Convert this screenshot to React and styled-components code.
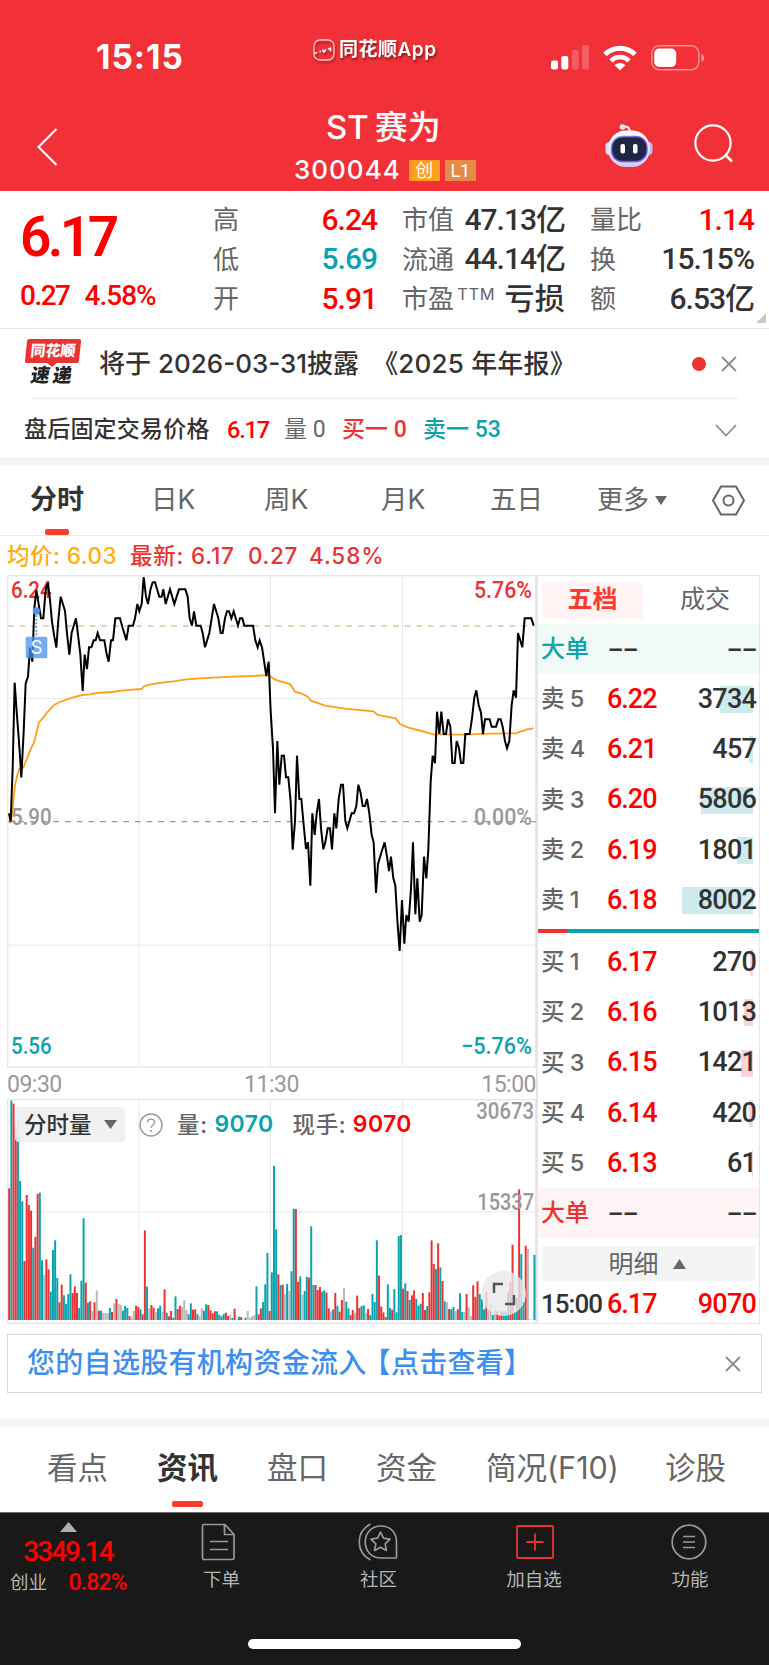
import React from "react";
import styled, { createGlobalStyle } from "styled-components";

const UI = `"Inter", "Noto Sans CJK SC", sans-serif`;
const NUM = `"Roboto", "Noto Sans CJK SC", sans-serif`;

const RED = "#eb3333";
const PURE_RED = "#ff0000";
const TEAL = "#0ba3ad";
const INK = "#333333";
const GREY = "#666666";
const LIGHT = "#999999";

const GlobalStyle = createGlobalStyle`
  * {
    box-sizing: border-box;
  }

  body {
    margin: 0;
    background: #fff;
    font-family: ${UI};
    color: ${INK};
  }

  svg {
    display: block;
    flex: none;
    overflow: visible;
  }
`;

const Page = styled.div`
  width: 769px;
  height: 1665px;
  overflow: hidden;
  display: flex;
  flex-direction: column;
  background: #fff;
`;

const Text = styled.span`
  display: block;
  font-family: ${(props) => (props.$num ? NUM : UI)};
  font-size: ${(props) => props.$size}px;
  font-weight: ${(props) => props.$weight || 400};
  letter-spacing: ${(props) => props.$track || 0}px;
  color: ${(props) => props.$color || INK};
  line-height: 1.2;
  white-space: nowrap;
`;

const Band = styled.div`
  height: 8px;
  flex: none;
  background: #f4f4f4;
`;

/* ---------- header ---------- */

const Header = styled.header`
  height: 191px;
  flex: none;
  background: #f23038;
`;

const StatusBar = styled.div`
  height: 100px;
  padding: 15px 63px 0 96px;
  display: grid;
  grid-template-columns: 217px 238px 1fr;
  align-items: center;
`;

const AppTag = styled.div`
  display: flex;
  align-items: center;
  gap: 4px;
  padding-bottom: 14px;
  filter: drop-shadow(1px 2px 1px rgba(60, 0, 0, 0.55));
`;

const StatusIcons = styled.div`
  display: flex;
  align-items: center;
`;

const NavBar = styled.div`
  height: 91px;
  display: grid;
  grid-template-columns: 294px 1fr 164px;
`;

const BackSlot = styled.div`
  padding: 28px 0 0 36px;
`;

const TitleBlock = styled.div`
  padding-top: 9px;
`;

const Title = styled(Text)`
  line-height: 36px;
  margin-left: 32px;
  word-spacing: -3px;
`;

const CodeRow = styled.div`
  display: flex;
  align-items: center;
  height: 24px;
  margin-top: 13px;
`;

const Badge = styled.span`
  width: 31px;
  height: 21px;
  margin-right: 5px;
  font: 400 18px/21px ${NUM};
  text-align: center;
  color: #fff;
  background: ${(props) => props.$bg};
`;

const NavIcons = styled.div`
  display: flex;
  padding-top: 24px;
`;

/* ---------- quote summary ---------- */

const Summary = styled.section`
  height: 138px;
  flex: none;
  display: grid;
  grid-template-columns: 213px 164px 25px 163px 25px 164px;
  border-bottom: 1px solid #e6e6e6;
  position: relative;
`;

const Current = styled.div`
  padding: 13px 0 0 20px;
`;

const Change = styled.div`
  display: flex;
  gap: 15px;
  margin-top: 9px;
`;

const StatColumn = styled.div`
  padding-top: 9px;
  display: grid;
  grid-auto-rows: 39.5px;
`;

const Stat = styled.div`
  display: flex;
  align-items: center;
  justify-content: space-between;
`;

const StatNote = styled(Text)`
  margin: 0 6px 8px 0;
`;

const Corner = styled.svg`
  position: absolute;
  right: 3px;
  bottom: 5px;
`;

/* ---------- notices ---------- */

const Notice = styled.div`
  height: 69px;
  flex: none;
  margin: 0 32px 0 24px;
  display: flex;
  align-items: center;
`;

const ReportName = styled.span`
  margin-left: 13px;
  letter-spacing: 0.2px;
`;

const Rule = styled.div`
  height: 1px;
  flex: none;
  margin: 0 31px;
  background: #e9e9e9;
`;

const Express = styled.div`
  width: 75px;
  position: relative;
`;

const ExpressTag = styled.div`
  width: 54px;
  height: 24px;
  margin-left: 2px;
  border-radius: 2px;
  background: ${RED};
  transform: skewX(-6deg);
  font: 900 15px/23px ${UI};
  text-align: center;
  color: #fff;
`;

const ExpressWord = styled.div`
  font: 900 19px/25px ${UI};
  letter-spacing: 3px;
  margin-left: 7px;
  color: #222;
  transform: skewX(-10deg);
`;

const Pointer = styled.svg`
  position: absolute;
  left: 22px;
  top: 23px;
`;

const Dot = styled.i`
  width: 14px;
  height: 14px;
  border-radius: 50%;
  background: ${RED};
  margin: 0 15px 0 auto;
`;

const AfterHours = styled.div`
  height: 58px;
  flex: none;
  padding: 4px 32px 0 24px;
  display: grid;
  grid-template-columns: 203px 57px 58px 81px 1fr auto;
  align-items: center;
`;

/* ---------- tabs ---------- */

const PeriodTabs = styled.nav`
  height: 71px;
  flex: none;
  padding: 0 24px 0 30px;
  display: grid;
  grid-template-columns: 121px 113px 117px 109px 107px 1fr auto;
  align-items: center;
  border-bottom: 1px solid #ebebeb;
`;

const SectionTabs = styled.nav`
  height: 85px;
  flex: none;
  padding-left: 47px;
  display: grid;
  grid-template-columns: 110px 110px 109px 110px 179px 1fr;
  align-items: center;
`;

const Tab = styled.div`
  position: relative;
  height: 100%;
  padding-bottom: ${(props) => props.$lift || 0}px;
  display: flex;
  align-items: center;
  gap: 6px;
  justify-self: start;
`;

const Underline = styled.i`
  position: absolute;
  left: 50%;
  bottom: ${(props) => props.$bottom}px;
  width: ${(props) => props.$width}px;
  height: 6px;
  margin-left: ${(props) => -props.$width / 2}px;
  border-radius: 2px;
  background: #ff3b30;
`;

const Legend = styled.div`
  height: 39px;
  flex: none;
  padding: 0 0 0 7px;
  display: grid;
  grid-template-columns: 123px 118px 61px 1fr;
  align-items: center;
`;

/* ---------- chart + order book ---------- */

const Board = styled.section`
  height: 749px;
  flex: none;
  margin: 0 9px 0 7px;
  display: grid;
  grid-template-columns: 529px 224px;
`;

const Charts = styled.div`
  display: flex;
  flex-direction: column;
`;

const TimeAxis = styled.div`
  height: 31px;
  padding-top: 2px;
  display: flex;
  justify-content: space-between;
  align-items: center;
`;

const VolumePane = styled.div`
  position: relative;
`;

const VolumeLegend = styled.div`
  position: absolute;
  left: 8px;
  top: 8px;
  height: 35px;
  display: flex;
  align-items: center;
`;

const VolumePicker = styled.div`
  width: 110px;
  height: 35px;
  margin-right: 14px;
  padding-left: 9px;
  display: flex;
  align-items: center;
  gap: 12px;
  border-radius: 4px;
  background: rgba(240, 240, 240, 0.93);
`;

const Expand = styled.div`
  position: absolute;
  left: 474px;
  top: 172px;
  width: 45px;
  height: 45px;
  border-radius: 50%;
  background: rgba(232, 232, 232, 0.8);
  display: grid;
  place-items: center;
`;

const Book = styled.aside`
  border: 1px solid #e6e6e6;
  border-left-width: 2px;
  display: flex;
  flex-direction: column;
`;

const BookTabs = styled.div`
  height: 48px;
  flex: none;
  padding: 0 4px;
  display: grid;
  grid-template-columns: 101px 1fr;
  align-items: center;
`;

const BookTab = styled(Text)`
  height: 37px;
  line-height: 35px;
  border-radius: 3px;
  text-align: center;
  background: ${(props) => (props.$active ? "#fff3f3" : "none")};
  padding-left: ${(props) => (props.$active ? 0 : 12)}px;
`;

const Level = styled.div`
  height: 50.2px;
  flex: none;
  padding: 0 3px 0 3px;
  display: grid;
  grid-template-columns: 66px 1fr auto;
  align-items: center;
  background: ${(props) => props.$bg || "none"};
`;

const LastTrade = styled(Level)`
  height: 42px;
  padding-top: 4px;
`;

const LevelName = styled(Text)`
  word-spacing: -1px;
`;

const Dashes = styled(Text)`
  padding-bottom: 3px;
`;

const Quantity = styled.div`
  position: relative;
`;

const Depth = styled.i`
  position: absolute;
  right: 3px;
  top: 50%;
  height: 27px;
  margin-top: -13px;
  background: ${(props) => props.$bg};
`;

const QuantityText = styled(Text)`
  position: relative;
`;

const Ratio = styled.div`
  height: 4px;
  flex: none;
  margin: 4px 0;
  background: linear-gradient(to right, ${RED} 29px, ${TEAL} 29px);
`;

const Detail = styled.div`
  height: 35px;
  flex: none;
  margin: 8px 4px 0;
  padding-right: 3px;
  display: flex;
  align-items: center;
  justify-content: center;
  gap: 14px;
  background: #f4f4f4;
`;

/* ---------- bottom ---------- */

const Promo = styled.div`
  height: 59px;
  flex: none;
  margin: 10px 7px 26px 7px;
  padding: 0 20px 0 19px;
  display: flex;
  align-items: center;
  justify-content: space-between;
  border: 1px solid #d6d6d6;
`;

const PromoLink = styled.span`
  margin-left: -4px;
`;

const Footer = styled.footer`
  flex: 1;
  border-top: 1px solid #6c6c6c;
  background: #191919;
`;

const FooterItems = styled.div`
  height: 126px;
  display: grid;
  grid-template-columns: 143px 157px 157px 154px 158px;
`;

const IndexBox = styled.div`
  padding: 9px 7px 0 0;
  display: flex;
  flex-direction: column;
  align-items: center;
  gap: 3px;
`;

const IndexRow = styled.div`
  display: flex;
  align-items: center;
  justify-content: space-between;
  width: 117px;
  margin: -3px 0 0 1px;
`;

const FooterItem = styled.div`
  padding-top: 10px;
  display: flex;
  flex-direction: column;
  align-items: center;
  gap: 7px;
`;

const HomeBar = styled.div`
  width: 273px;
  height: 10px;
  margin: 0 auto;
  border-radius: 5px;
  background: #fff;
`;

/* ---------- data ---------- */

const STATS = [
  [
    ["高", "6.24", PURE_RED],
    ["低", "5.69", TEAL],
    ["开", "5.91", PURE_RED],
  ],
  [
    ["市值", "47.13亿", INK],
    ["流通", "44.14亿", INK],
    ["市盈", "亏损", INK, "TTM"],
  ],
  [
    ["量比", "1.14", PURE_RED],
    ["换", "15.15%", INK],
    ["额", "6.53亿", INK],
  ],
];

const ASKS = [
  ["卖", 5, "6.22", 3734, 33],
  ["卖", 4, "6.21", 457, 4],
  ["卖", 3, "6.20", 5806, 52],
  ["卖", 2, "6.19", 1801, 16],
  ["卖", 1, "6.18", 8002, 71],
];

const BIDS = [
  ["买", 1, "6.17", 270, 3],
  ["买", 2, "6.16", 1013, 9],
  ["买", 3, "6.15", 1421, 12],
  ["买", 4, "6.14", 420, 4],
  ["买", 5, "6.13", 61, 1],
];

// chart units are a third of a pixel; the afternoon starts at AFTERNOON_X
const AFTERNOON_X = 795;

const PRICE_AM =
  "27,745 32,770 38,610 44,353 50,440 57,530 64,637 71,500 77,355 84,335 90,248 97,290 103,130 109,75 116,118 123,160 130,160 137,75 143,53 149,95 156,170 163,215 169,248 175,165 182,95 195,138 201,205 208,269 215,203 228,160 235,218 241,268 248,378 254,269 261,312 267,247 274,247 281,226 287,226 293,204 300,226 313,226 320,268 326,290 333,226 339,226 346,160 360,160 366,182 379,226 386,182 399,182 405,160 412,117 418,138 425,117 431,36 438,95 444,117 451,75 458,52 465,52 478,95 485,95 490,73 497,117 510,73 523,117 537,73 556,73 563,95 569,160 576,182 582,139 589,182 602,182 608,204 615,247 628,204 635,160 642,117 655,160 662,204 668,204 675,160 681,139 687,139 694,160 701,139 714,182 720,160 727,160 733,182 759,182 766,226 773,247 779,226 786,247 799,333";

const PRICE_PM =
  "11,290 17,440 24,550 30,745 37,528 43,659 50,572 57,572 63,637 70,637 77,710 83,854 90,770 96,572 103,702 109,702 116,780 123,852 129,832 136,962 142,745 149,810 155,745 162,702 168,790 175,853 181,832 188,790 195,790 201,853 208,745 214,790 221,702 228,659 234,659 241,768 247,790 260,745 267,745 274,723 280,659 287,684 293,723 300,723 306,702 313,745 320,810 326,832 333,984 339,897 352,853 359,832 366,875 372,918 378,875 385,940 391,962 398,1080 404,1158 411,1005 418,1136 424,1050 431,1070 438,970 444,832 451,1048 457,940 464,1070 470,1050 477,875 484,940 490,853 497,650 503,572 510,595 516,440 523,507 529,440 536,507 543,507 549,463 556,485 562,594 569,594 575,528 582,550 588,594 595,594 601,507 614,507 621,460 628,397 634,376 641,420 648,443 654,507 660,463 674,463 680,485 693,485 700,463 707,463 713,485 720,528 726,550 733,528 740,420 746,376 753,398 759,204 772,247 779,160 799,160 806,182";

const AVERAGE_AM =
  "30,775 34,765 38,730 45,660 52,630 58,612 70,608 77,590 85,572 92,552 102,533 109,505 117,472 130,457 137,448 142,441 150,434 163,419 180,411 210,400 230,394 248,390 270,388 290,384 335,381 370,376 425,372 433,363 450,359 490,352 520,349 560,343 600,340 700,335 760,333";

const AVERAGE_PM =
  "11,330 30,344 75,357 90,380 110,386 128,395 138,407 180,422 240,431 325,439 338,450 392,460 405,477 430,488 470,498 505,508 600,509 680,506 753,505 765,500 775,498 785,493 797,492 806,489";

const VOLUME_BASE = 780;
const VOLUMES =
  "R385 T122 R131 R200 T173 T363 T424 R603 R405 R435 R452 T563 R531 R402 T398 T601 G645 R598 R628 T695 T570 T541 T654 R727 R674 T706 T732 T702 T643 R699 R679 R699 T744 T662 T475 R668 T728 R724 G753 R727 G691 R752 T752 G759 G759 G759 T744 R756 G730 R717 G732 G735 T752 T738 T744 R768 G772 G753 R737 R741 T748 R763 R511 T680 G745 R735 R743 G756 T745 T737 G756 R688 T759 R769 R753 T773 T709 R747 R737 G741 G721 G750 T763 T730 R749 R748 T763 G768 G745 T752 T733 R735 R751 R760 R754 T754 T764 T769 T762 R758 R768 G765 T774 R746 G778 T770 R771 G778 T773 G753 G774 G769 G765 T679 R763 R745 T726 T673 T579 R753 T637 T318 T508 R643 T675 R674 G703 T672 G693 T634 T446 R447 R666 T649 G705 T693 T650 R653 T499 T675 R675 R690 R681 T695 T691 R698 R745 G754 T748 R699 T738 R755 R720 G683 T725 T745 R765 R750 G758 R707 R744 T738 T736 G758 R747 T765 T702 T726 T541 R647 R740 R757 R771 T673 T744 R749 T687 T757 T528 T525 R686 T670 R693 T720 R706 R691 T717 T737 T731 R699 R750 T738 R697 R541 R612 T627 R550 T622 R663 T724 G726 R747 T748 T741 G753 R748 T700 T756 G756 R702 G742 G768 R676 R711 R664 T702 T717 T748 R695 G748 G734 T765 G750 R754 R766 R754 T755 T755 T697 R667 R554 T757 T714 R388 T582 T725 R557 G567 G778 G780 T585".split(
    " "
  );

const VOLUME_COLORS = { R: RED, T: TEAL, G: "#b8b8b8" };

function joinSessions(morning, afternoon) {
  const shifted = afternoon.split(" ").map((point) => {
    const [x, y] = point.split(",").map(Number);
    return `${x + AFTERNOON_X},${y}`;
  });
  return `${morning} ${shifted.join(" ")}`;
}

/* ---------- icons ---------- */

const Cross = () => (
  <svg width="16" height="16" viewBox="0 0 16 16" stroke="#8c8c8c" strokeWidth="1.8">
    <path d="M1 1 15 15M15 1 1 15" />
  </svg>
);

const Triangle = ({ width, height, color, up }) => (
  <svg width={width} height={height} viewBox="0 0 10 10" preserveAspectRatio="none">
    <path d={up ? "M0 10 5 0l5 10z" : "M0 0h10L5 10z"} fill={color} />
  </svg>
);

const AppLogo = () => (
  <svg width="22" height="22" viewBox="0 0 22 22" fill="none" stroke="#fff">
    <rect x="1" y="1" width="20" height="20" rx="6" strokeOpacity=".75" strokeWidth="1.3" />
    <path d="M1.5 14.500 4 13.500M6.500 12.500h1.500M9.500 10.500l1.500 2.500 2-2.500M15 10l1.500-.5M17.500 8.500v4" strokeWidth="1.700" />
  </svg>
);

const Signal = () => (
  <svg width="38" height="25" viewBox="0 0 38 25" fill="#fff">
    <rect y="15.5" width="7" height="9" rx="2" />
    <rect x="10.3" y="11" width="7" height="13.5" rx="2" />
    <rect x="20.8" y="5" width="7" height="19.5" rx="2" opacity=".22" />
    <rect x="31" y="0" width="7" height="24.5" rx="2" opacity=".22" />
  </svg>
);

const Wifi = () => (
  <svg width="34" height="26" viewBox="0 0 34 26" fill="none" stroke="#fff" strokeWidth="5">
    <path d="M2 9.5C10.500 1.200 23.500 1.200 32 9.500" />
    <path d="M8 15.800C13 10.800 21 10.800 26 15.800" strokeWidth="4.600" />
    <path d="M11.500 20.200c3.200-2.800 7.800-2.800 11 0L17 25.300z" fill="#fff" stroke="none" />
  </svg>
);

const Battery = () => (
  <svg width="54" height="26" viewBox="0 0 54 26">
    <rect x=".8" y=".8" width="47" height="24" rx="7.500" fill="none" stroke="#fff" strokeOpacity=".45" strokeWidth="1.500" />
    <rect x="3.200" y="3.500" width="22" height="18.500" rx="5" fill="#fff" />
    <path d="M50.500 9c3.500 1.500 3.500 6.500 0 8z" fill="#fff" opacity=".5" />
  </svg>
);

const Robot = () => (
  <svg width="48" height="44" viewBox="0 0 48 44">
    <defs>
      <linearGradient id="shell" x1="0" y1="0" x2="0" y2="1">
        <stop offset="0" stopColor="#ffffff" />
        <stop offset="1" stopColor="#cfcdf5" />
      </linearGradient>
      <linearGradient id="rim" x1="0" y1="0" x2="1" y2="1">
        <stop offset="0" stopColor="#54c8ee" />
        <stop offset=".5" stopColor="#8b3fe0" />
        <stop offset="1" stopColor="#5b62f0" />
      </linearGradient>
    </defs>
    <path d="M17 3c5-1 8 0 7.500 5" fill="none" stroke="#f3e4f2" strokeWidth="2.200" />
    <circle cx="17.500" cy="3" r="2.800" fill="#f8e8f0" />
    <rect x=".5" y="18" width="8" height="13" rx="4" fill="#dcdcf4" />
    <rect x="39.500" y="18" width="8" height="13" rx="4" fill="#bfbdec" />
    <rect x="3" y="6.500" width="42" height="36.500" rx="18" fill="url(#shell)" />
    <rect x="6.500" y="12.500" width="35.500" height="25" rx="11" fill="#1f2644" stroke="url(#rim)" strokeWidth="1.300" />
    <rect x="15.500" y="20" width="4.500" height="9.500" rx="1.800" fill="#fff" />
    <rect x="28" y="20" width="4.500" height="9.500" rx="1.800" fill="#fff" />
  </svg>
);

const Search = () => (
  <svg width="40" height="40" viewBox="0 0 40 40" fill="none" stroke="#fff" strokeWidth="2.100">
    <circle cx="19" cy="19" r="17.600" />
    <path d="m31 30.500 7 7" strokeWidth="2.500" />
  </svg>
);

const Hexagon = () => (
  <svg width="33" height="31" viewBox="0 0 33 31" fill="none" stroke={GREY} strokeWidth="2">
    <path d="M9 1.500h15l8 14-8 14H9l-8-14z" strokeLinejoin="round" />
    <circle cx="16.500" cy="15.500" r="5" />
  </svg>
);

const Help = () => (
  <svg width="24" height="24" viewBox="0 0 24 24" fill="none" stroke={LIGHT} strokeWidth="1.400">
    <circle cx="12" cy="12" r="11" />
    <path d="M8.500 9.500c0-4.500 7-4.500 7 0 0 2.400-3.400 2.600-3.400 5.300" />
    <path d="M12 17v1.800" strokeWidth="1.800" />
  </svg>
);

const OrderIcon = () => (
  <svg width="38" height="38" viewBox="2 0 38 38" fill="none" stroke="#999" strokeWidth="1.700" strokeLinejoin="round">
    <path d="M3 1.500h21l9 10V35a1.500 1.500 0 0 1-1.500 1.500h-28A1.500 1.500 0 0 1 1.500 35V3A1.500 1.500 0 0 1 3 1.500z" />
    <path d="M23.500 1.500v10H33M9 18.500h18M9 26.500h18" />
  </svg>
);

const CommunityIcon = () => (
  <svg width="40" height="38" viewBox="1 0 40 38" fill="none" stroke="#999" strokeWidth="1.700" strokeLinejoin="round">
    <path d="M12.500 1C-2.500 9-2.500 29 12.500 37" />
    <path d="M23 3c-21 0-21 32 0 32h14.500a1 1 0 0 0 1-1V19C38.500 9 32 3 23 3z" />
    <path d="m22.500 9 2.900 6.200 6.600.9-4.800 4.700 1.200 6.700-5.900-3.200-5.900 3.200 1.200-6.700-4.800-4.700 6.600-.9z" />
  </svg>
);

const AddIcon = () => (
  <svg width="38" height="38" viewBox="-1 0 38 38" fill="none" stroke={RED} strokeWidth="1.800">
    <rect x="1" y="3" width="36" height="32" rx="1" />
    <path d="M19 10.500v17M10.500 19h17" />
  </svg>
);

const MenuIcon = () => (
  <svg width="38" height="38" viewBox="1 0 38 38" fill="none" stroke="#999" strokeWidth="1.700">
    <circle cx="19" cy="19" r="16.800" />
    <path d="M13 13.500h12M13 19h12M13 24.500h12" />
  </svg>
);

/* ---------- blocks ---------- */

function ChartLabel({ x, y, width, end, color = LIGHT, children }) {
  return (
    <text
      x={x}
      y={y}
      textLength={width}
      textAnchor={end ? "end" : "start"}
      lengthAdjust="spacingAndGlyphs"
      fontFamily="Roboto, sans-serif"
      fontSize="69"
      fontWeight="500"
      fill={color}
    >
      {children}
    </text>
  );
}

function PriceChart() {
  return (
    <svg width="529" height="493" viewBox="21 30 1587 1479" fill="none">
      <rect x="23" y="32" width="1584" height="1474" stroke="#e6e6e6" strokeWidth="4" />
      <path d="M416.500 32v1474M811.500 32v1474M1207.500 32v1474M23 400.500h1584M23 1140.500h1584" stroke="#e9e9e9" strokeWidth="3" />
      <path d="M24 183h1580" stroke="#e0c39c" strokeWidth="5" strokeDasharray="17 18" />
      <path d="M24 770h1584" stroke={LIGHT} strokeWidth="3.500" strokeDasharray="17 18" strokeDashoffset="4" />
      <ChartLabel x={33} y={98} width={122} color={RED}>6.24</ChartLabel>
      <ChartLabel x={1596} y={98} width={174} color={RED} end>5.76%</ChartLabel>
      <ChartLabel x={33} y={781} width={122}>5.90</ChartLabel>
      <ChartLabel x={1596} y={781} width={174} end>0.00%</ChartLabel>
      <ChartLabel x={33} y={1467} width={122} color={TEAL}>5.56</ChartLabel>
      <ChartLabel x={1596} y={1467} width={213} color={TEAL} end>−5.76%</ChartLabel>
      <polyline points={joinSessions(AVERAGE_AM, AVERAGE_PM)} stroke="#ff9f1a" strokeWidth="5.500" />
      <polyline points={joinSessions(PRICE_AM, PRICE_PM)} stroke="#000" strokeWidth="6" />
      <path d="M109 150v66" stroke="#6ba6f3" strokeWidth="6" strokeDasharray="6 5" />
      <circle cx="109" cy="138" r="11" fill="#4a93f0" />
      <rect x="77" y="215" width="65" height="65" rx="5" fill="#4a93f0" opacity=".76" />
      <text x="109.500" y="268" textAnchor="middle" fontFamily="Inter, sans-serif" fontSize="56" fill="#fff">S</text>
    </svg>
  );
}

function VolumeChart() {
  return (
    <svg width="529" height="225" viewBox="21 117 1587 675" fill="none">
      <rect x="23" y="119" width="1584" height="671" stroke="#e6e6e6" strokeWidth="4" />
      <path d="M416.500 119v671M811.500 119v671M1207.500 119v671M23 455.500h1584" stroke="#e9e9e9" strokeWidth="3" />
      {VOLUMES.map((entry, i) => {
        const top = Number(entry.slice(1));
        return (
          <rect
            key={i}
            x={24.500 + i * 6.566}
            y={top}
            width="6"
            height={VOLUME_BASE - top}
            fill={VOLUME_COLORS[entry[0]]}
          />
        );
      })}
      <ChartLabel x={1602} y={178} width={173} end>30673</ChartLabel>
      <ChartLabel x={1602} y={450} width={170} end>15337</ChartLabel>
    </svg>
  );
}

function BookLevel({ level, bg }) {
  const [side, index, price, quantity, depth] = level;
  return (
    <Level>
      <LevelName $size={23.5} $weight={500} $color={GREY}>{side} {index}</LevelName>
      <Text $num $size={27} $weight={500} $track={-1} $color={PURE_RED}>{price}</Text>
      <Quantity>
        <Depth $bg={bg} style={{ width: depth }} />
        <QuantityText $num $size={27} $weight={500} $track={-0.8}>{quantity}</QuantityText>
      </Quantity>
    </Level>
  );
}

function BigOrders({ color, bg }) {
  return (
    <Level $bg={bg}>
      <Text $size={24} $weight={500} $color={color}>大单</Text>
      <Dashes $size={26} $weight={500} $track={-2.4}>−−</Dashes>
      <Dashes $size={26} $weight={500} $track={-2.4}>−−</Dashes>
    </Level>
  );
}

function OrderBook() {
  return (
    <Book>
      <BookTabs>
        <BookTab $active $size={25} $weight={700} $color="#ff3b30">五档</BookTab>
        <BookTab $size={25} $color={GREY}>成交</BookTab>
      </BookTabs>
      <BigOrders color={TEAL} bg="#f1faf6" />
      {ASKS.map((level) => (
        <BookLevel key={level[2]} level={level} bg="#cdebef" />
      ))}
      <Ratio />
      {BIDS.map((level) => (
        <BookLevel key={level[2]} level={level} bg="#fbd2d5" />
      ))}
      <BigOrders color={RED} bg="#fff4f5" />
      <Detail>
        <Text $size={25} $color={GREY}>明细</Text>
        <Triangle width={13} height={10} color={GREY} up />
      </Detail>
      <LastTrade>
        <Text $num $size={26} $weight={500} $track={-1}>15:00</Text>
        <Text $num $size={27} $weight={500} $track={-1} $color={PURE_RED}>6.17</Text>
        <Text $num $size={27} $weight={500} $track={-0.8} $color={PURE_RED}>9070</Text>
      </LastTrade>
    </Book>
  );
}

function TopBar() {
  return (
    <Header>
      <StatusBar>
        <Text $size={33.5} $weight={700} $color="#fff" $track={1}>15:15</Text>
        <AppTag>
          <AppLogo />
          <Text $size={19} $weight={600} $color="#fff" $track={0.5}>同花顺App</Text>
        </AppTag>
        <StatusIcons>
          <Signal />
          <svg width="14" height="1" />
          <Wifi />
          <svg width="14" height="1" />
          <Battery />
        </StatusIcons>
      </StatusBar>
      <NavBar>
        <BackSlot>
          <svg width="22" height="38" viewBox="0 0 22 38" fill="none" stroke="#fff" strokeWidth="2">
            <path d="M20.500 1 2.500 19l18 18" />
          </svg>
        </BackSlot>
        <TitleBlock>
          <Title $size={33} $weight={500} $color="#fff">ST 赛为</Title>
          <CodeRow>
            <Text $size={26} $weight={500} $color="#fff" $track={1}>300044</Text>
            <svg width="8" height="1" />
            <Badge $bg="#ff9d1e">创</Badge>
            <Badge $bg="#e48b48">L1</Badge>
          </CodeRow>
        </TitleBlock>
        <NavIcons>
          <Robot />
          <svg width="41" height="1" />
          <Search />
        </NavIcons>
      </NavBar>
    </Header>
  );
}

function QuoteSummary() {
  return (
    <Summary>
      <Current>
        <Text $num $size={55} $weight={600} $track={-3.6} $color={PURE_RED}>6.17</Text>
        <Change>
          <Text $num $size={28} $weight={500} $track={-1.5} $color={PURE_RED}>0.27</Text>
          <Text $num $size={28} $weight={500} $track={-1} $color={PURE_RED}>4.58%</Text>
        </Change>
      </Current>
      {STATS.map((column, i) => (
        <React.Fragment key={i}>
          {i > 0 && <span />}
          <StatColumn>
            {column.map(([label, value, color, note]) => (
              <Stat key={label}>
                <Text $size={26} $color={GREY}>{label}</Text>
                {note && <StatNote $size={16.5} $track={0.6} $color={GREY}>{note}</StatNote>}
                <Text $num $size={30} $weight={500} $track={note ? 0.3 : -1} $color={color}>{value}</Text>
              </Stat>
            ))}
          </StatColumn>
        </React.Fragment>
      ))}
      <Corner width="10" height="10" viewBox="0 0 10 10">
        <path d="M10 0v10H0z" fill="#c8c8c8" />
      </Corner>
    </Summary>
  );
}

function Notices() {
  return (
    <>
      <Notice>
        <Express>
          <ExpressTag>同花顺</ExpressTag>
          <Pointer width="12" height="5" viewBox="0 0 12 5">
            <path d="M0 0h12L6 5z" fill={RED} />
          </Pointer>
          <ExpressWord>速递</ExpressWord>
        </Express>
        <Text $size={26} $weight={500}>
          将于 2026-03-31披露<ReportName>《2025 年年报》</ReportName>
        </Text>
        <Dot />
        <Cross />
      </Notice>
      <Rule />
      <AfterHours>
        <Text $size={23} $weight={500} $track={0.2}>盘后固定交易价格</Text>
        <Text $num $size={23.5} $weight={500} $track={-1.2} $color={PURE_RED}>6.17</Text>
        <Text $num $size={23} $color={GREY}>量 0</Text>
        <Text $num $size={23} $weight={500} $color={RED}>买一 0</Text>
        <Text $num $size={23} $weight={500} $color={TEAL}>卖一 53</Text>
        <svg width="22" height="13" viewBox="0 0 22 13" fill="none" stroke="#8c8c8c" strokeWidth="1.800">
          <path d="M1 1l10 10.500L21 1" />
        </svg>
      </AfterHours>
    </>
  );
}

function BottomBar() {
  return (
    <Footer>
      <FooterItems>
        <IndexBox>
          <Triangle width={17} height={10} color="#b0b0b0" up />
          <Text $num $size={28} $weight={500} $track={-2} $color={PURE_RED}>3349.14</Text>
          <IndexRow>
            <Text $size={18.5} $color="#b5b5b5">创业</Text>
            <Text $num $size={23} $weight={500} $track={-0.8} $color={PURE_RED}>0.82%</Text>
          </IndexRow>
        </IndexBox>
        <FooterItem>
          <OrderIcon />
          <Text $size={18.5} $color="#b5b5b5">下单</Text>
        </FooterItem>
        <FooterItem>
          <CommunityIcon />
          <Text $size={18.5} $color="#b5b5b5">社区</Text>
        </FooterItem>
        <FooterItem>
          <AddIcon />
          <Text $size={18.5} $color="#b5b5b5">加自选</Text>
        </FooterItem>
        <FooterItem>
          <MenuIcon />
          <Text $size={18.5} $color="#b5b5b5">功能</Text>
        </FooterItem>
      </FooterItems>
      <HomeBar />
    </Footer>
  );
}

function App() {
  return (
    <Page>
      <GlobalStyle />
      <TopBar />
      <QuoteSummary />
      <Notices />
      <Band />

      <PeriodTabs>
        <Tab>
          <Text $size={27} $weight={700}>分时</Text>
          <Underline $width={24} $bottom={0} />
        </Tab>
        {["日K", "周K", "月K", "五日"].map((label) => (
          <Tab key={label}>
            <Text $size={26.5} $color={GREY}>{label}</Text>
          </Tab>
        ))}
        <Tab>
          <Text $size={26} $color={GREY}>更多</Text>
          <Triangle width={12} height={9} color={GREY} />
        </Tab>
        <Hexagon />
      </PeriodTabs>

      <Legend>
        <Text $size={22.5} $weight={500} $track={0.5} $color="#ffae0d">均价: 6.03</Text>
        <Text $size={22.5} $weight={500} $track={0.8} $color={RED}>最新: 6.17</Text>
        <Text $size={22.5} $weight={500} $track={0.6} $color={RED}>0.27</Text>
        <Text $size={22.5} $weight={500} $track={0.9} $color={RED}>4.58%</Text>
      </Legend>

      <Board>
        <Charts>
          <PriceChart />
          <TimeAxis>
            <Text $num $size={23} $track={-0.5} $color={LIGHT}>09:30</Text>
            <Text $num $size={23} $track={-0.5} $color={LIGHT}>11:30</Text>
            <Text $num $size={23} $track={-0.5} $color={LIGHT}>15:00</Text>
          </TimeAxis>
          <VolumePane>
            <VolumeChart />
            <VolumeLegend>
              <VolumePicker>
                <Text $size={22.5} $weight={500}>分时量</Text>
                <Triangle width={13} height={9} color={GREY} />
              </VolumePicker>
              <Help />
              <svg width="14" height="1" />
              <Text $size={22.5} $weight={500} $track={0.7} $color={GREY}>量:&nbsp;</Text>
              <Text $size={23} $weight={600} $track={0.4} $color={TEAL}>9070</Text>
              <svg width="19" height="1" />
              <Text $size={22.5} $weight={500} $track={0.6} $color={GREY}>现手:&nbsp;</Text>
              <Text $size={23} $weight={600} $track={0.4} $color={PURE_RED}>9070</Text>
            </VolumeLegend>
            <Expand>
              <svg width="24" height="24" viewBox="0 0 24 24" fill="none" stroke="#555" strokeWidth="2.500">
                <path d="M2 11V2h9M22 13v9h-9" />
              </svg>
            </Expand>
          </VolumePane>
        </Charts>
        <OrderBook />
      </Board>

      <Promo>
        <Text $size={28} $weight={500} $track={0.3} $color="#3d8ef0">
          您的自选股有机构资金流入<PromoLink>【点击查看】</PromoLink>
        </Text>
        <Cross />
      </Promo>
      <Band />

      <SectionTabs>
        <Tab $lift={2}>
          <Text $size={30.5} $color={GREY}>看点</Text>
        </Tab>
        <Tab $lift={2}>
          <Text $size={30.5} $weight={700}>资讯</Text>
          <Underline $width={31} $bottom={5} />
        </Tab>
        {["盘口", "资金", "简况(F10)", "诊股"].map((label) => (
          <Tab $lift={2} key={label}>
            <Text $size={30.5} $color={GREY}>{label}</Text>
          </Tab>
        ))}
      </SectionTabs>

      <BottomBar />
    </Page>
  );
}

export default App;
